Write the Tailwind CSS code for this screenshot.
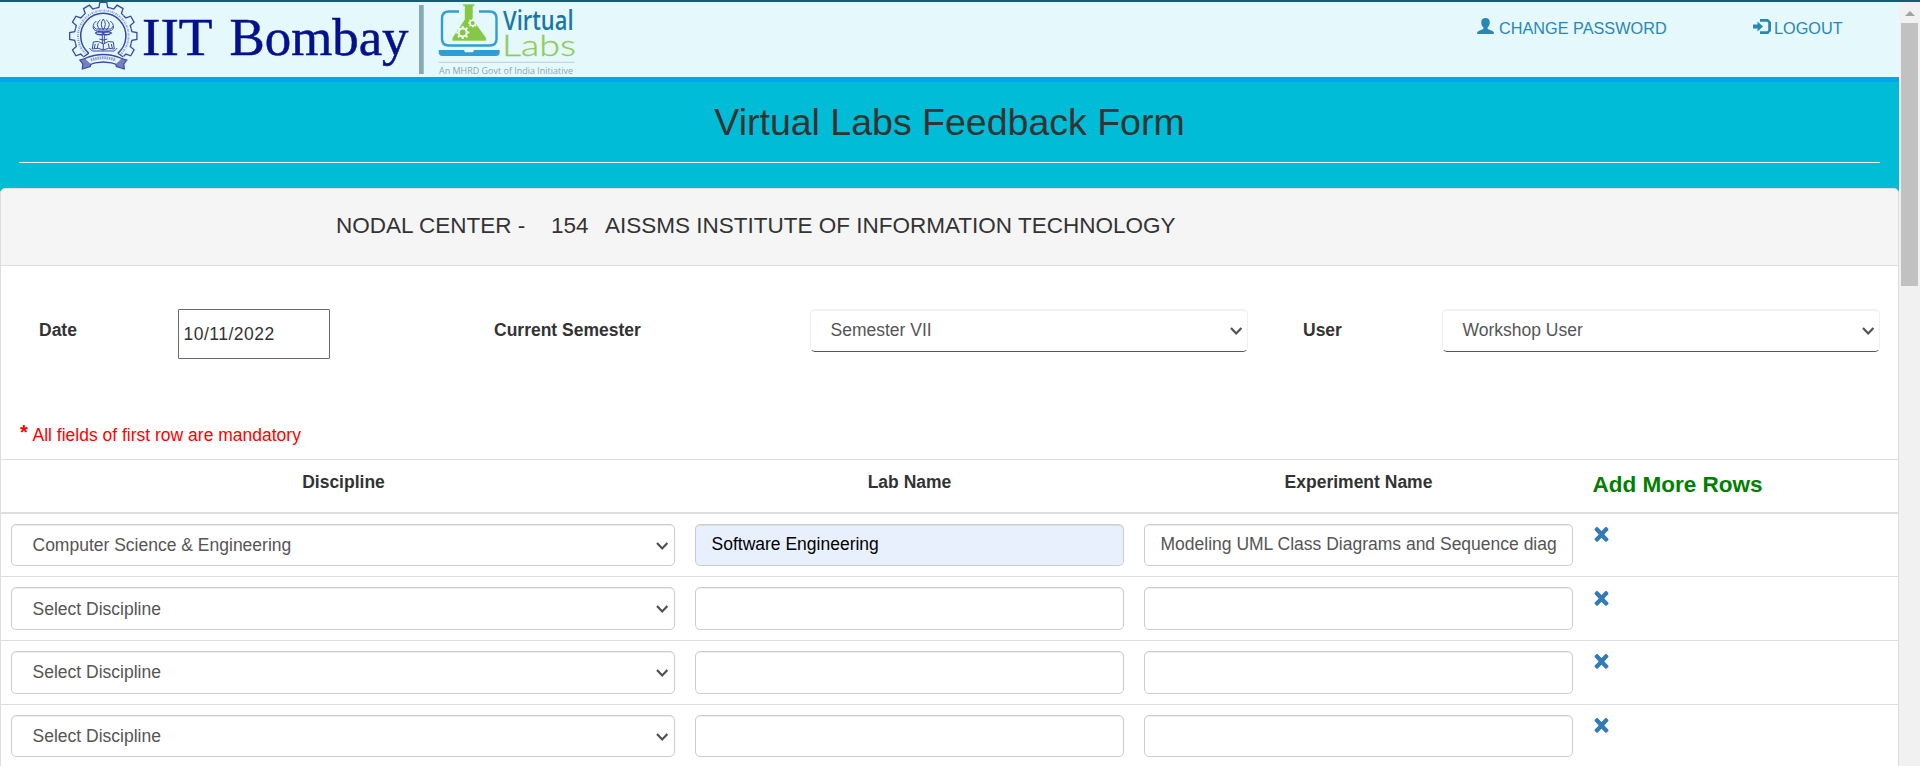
<!DOCTYPE html>
<html lang="en">
<head>
<meta charset="utf-8">
<title>Virtual Labs Feedback Form</title>
<script src="https://cdn.jsdelivr.net/npm/@tailwindcss/browser@4"></script>
</head>
<body class="flex h-[766px] w-[1920px] overflow-hidden bg-white font-['Liberation_Sans',Arial,sans-serif] text-[17.5px] leading-[24px] text-[#333]">
<svg class="hidden">
  <defs>
    <path id="tooth" d="M-7.4 -27.8 L-4.4 -28.6 L-3.4 -33.6 L3.4 -33.6 L4.4 -28.6 L7.4 -27.8" fill="none" stroke="#3a48a8" stroke-width="1.3"/>
    <g id="cog"><circle r="4" fill="none" stroke="#eefaf0" stroke-width="2.2"/><path d="M0-6.6V-4M0 4V6.6M-6.6 0H-4M4 0H6.6M-4.7-4.7L-3-3M3 3L4.7 4.7M-4.7 4.7L-3 3M3-3L4.7-4.7" stroke="#eefaf0" stroke-width="2"/></g>
    <path id="chev" d="M1 1 L6.2 6.4 L11.4 1" fill="none" stroke="#505050" stroke-width="2.2"/>
    <path id="cross" d="M3.8 1.2 L7.5 4.9 L11.2 1.2 Q12 .5 12.8 1.2 L14.2 2.7 Q14.9 3.5 14.2 4.2 L10.3 8.4 L14.2 12.4 Q14.9 13.2 14.2 13.9 L12.8 15.4 Q12 16.1 11.2 15.4 L7.5 11.8 L3.8 15.4 Q3 16.1 2.2 15.4 L.8 13.9 Q.1 13.2 .8 12.4 L4.7 8.4 L.8 4.2 Q.1 3.5 .8 2.7 L2.2 1.2 Q3 .5 3.8 1.2Z" fill="#337ab7"/>
  </defs>
</svg>

<main class="flex h-full w-[1899px] flex-col">
  <header class="flex h-[82px] shrink-0 items-start border-t-2 border-b-[5px] border-t-[#0a6272] border-b-[#03a5ec] bg-[#e5f8fc]">
    <svg class="ml-[60px] block h-[75px] w-[540px] shrink-0" viewBox="60 2 540 75">
      <g transform="translate(103.3 36)">
        <use href="#tooth"/><use href="#tooth" transform="rotate(30)"/><use href="#tooth" transform="rotate(60)"/><use href="#tooth" transform="rotate(90)"/><use href="#tooth" transform="rotate(120)"/><use href="#tooth" transform="rotate(-30)"/><use href="#tooth" transform="rotate(-60)"/><use href="#tooth" transform="rotate(-90)"/><use href="#tooth" transform="rotate(-120)"/>
        <path d="M-14.5 17.3 A22.6 22.6 0 1 1 14.5 17.3" fill="none" stroke="#3a48a8" stroke-width="1.5"/>
        <path d="M-16.5 19 A25.3 25.3 0 1 1 16.5 19" fill="none" stroke="#8a98cf" stroke-width="2" stroke-dasharray="1.3 .9 .7 1.2"/>
        <path d="M-14.5 17.3 L-20 21 M14.5 17.3 L20 21" stroke="#3a48a8" stroke-width="1.2"/>
        <g fill="none" stroke="#3a48a8" stroke-width="1">
          <path d="M0-17 Q-4-12 0-6 Q4-12 0-17 M-3-16 Q-9-12-3-6 M3-16 Q9-12 3-6 M-7-15 Q-13-10-7-7 H7 Q13-10 7-15 M-10-10 Q-11-6-6-5 H6 Q11-6 10-10"/>
          <path d="M-8-3 Q-4-6 0-3 Q4-6 8-3 Q4 0 0-2 Q-4 0-8-3 M-5-4 H5" stroke-width="1.4"/>
          <path d="M-1-1 V8 M1-1 V8 M-4 3 Q0 5 4 3"/>
          <path d="M-10 6 Q-5 4 0 8 Q5 4 10 6 L11 13 Q5 11 0 14 Q-5 11-11 13Z M-11 15 H11 M-8 8 L-9 12 M-5 7.500 L-6 12 M8 8 L9 12 M5 7.500 L6 12 M0 8 V14"/>
          <path d="M-14 12 L-11 15 M14 12 L11 15"/>
        </g>
        <path d="M-18.500 22.500 Q0 14.500 18.500 22.500 L16.500 29.500 Q0 22.500-16.500 29.500Z" fill="#e5f8fc" stroke="#3a48a8" stroke-width="1.300"/>
        <path d="M-18.500 22.500 L-23.500 24 L-20.500 28 L-21 33 L-13 30.500 L-12.500 28 M18.500 22.500 L23.500 24 L20.500 28 L21 33 L13 30.500 L12.500 28" fill="#7480c2" stroke="#3a48a8" stroke-width="1.200"/>
        <path d="M-12.500 24 Q0 19.500 12.500 24" fill="none" stroke="#8a98cf" stroke-width="3" stroke-dasharray="1.5 .8"/>
      </g>
      <g font-family="Liberation Serif, serif" font-size="53" fill="#04118c" stroke="#04118c" stroke-width=".5">
        <text x="142" y="55.300" textLength="70.500" lengthAdjust="spacingAndGlyphs">IIT</text>
        <text x="229.500" y="55.300" textLength="179" lengthAdjust="spacingAndGlyphs">Bombay</text>
      </g>
      <rect x="419" y="5" width="4.700" height="69" fill="#87a9b3"/>
      <path d="M459 11.500 H449 Q442 11.500 442 18.500 V39 Q442 45.500 449 45.500 H489.500 Q496.500 45.500 496.500 39 V18.500 Q496.500 11.500 489.500 11.500 H479" fill="none" stroke="#309dd3" stroke-width="2.400"/>
      <path d="M438.700 50 H464 L465 52.200 H473 L474 50 H499.700 V52 Q499.700 56 495.700 56 H442.700 Q438.700 56 438.700 52Z" fill="#309dd3"/>
      <path d="M462.800 4 H474.700 V6.200 H473 V19.500 L486 37.500 Q487.500 41 484.500 41 H453.500 Q451 41 452.500 37.500 L464.500 19.500 V6.200 H462.800Z" fill="#86c845" stroke="#e5f8fc" stroke-width=".6"/>
      <use href="#cog" transform="translate(462.700 32.500)"/>
      <use href="#cog" transform="translate(472.800 23) scale(.7)"/>
      <text x="503" y="30" textLength="70.500" lengthAdjust="spacingAndGlyphs" font-family="Open Sans, sans-serif" font-weight="600" font-size="26.500" fill="#1877a8">Virtual</text>
      <text x="502" y="56" textLength="74" lengthAdjust="spacingAndGlyphs" font-family="Lato, sans-serif" font-weight="300" font-size="29.500" fill="#8dcc5a" stroke="#8dcc5a" stroke-width=".3">Labs</text>
      <rect x="438.700" y="61.800" width="136" height="1" fill="#b9d0d6"/>
      <text x="439" y="74" textLength="134" lengthAdjust="spacingAndGlyphs" font-family="Open Sans, sans-serif" font-size="9.300" fill="#94a4a9">An MHRD Govt of India Initiative</text>
    </svg>
    <nav class="ml-[877px] flex pt-[13px] text-[16.25px] text-[#2a87b3]">
      <a class="flex w-[276px] items-start gap-[5px]">
        <svg class="mt-[3px] h-[16px] w-[17px] shrink-0" viewBox="0 0 17 16"><path d="M8.500 0 C11 0 12.800 1.500 12.800 4.300 C12.800 6.500 12 8.500 10.600 9.500 V11 L15.500 13.100 Q17 13.800 17 16 H0 Q0 13.800 1.500 13.100 L6.400 11 V9.500 C5 8.500 4.200 6.500 4.200 4.300 C4.200 1.500 6 0 8.500 0Z" fill="#2a87b3"/></svg>
        <span class="pt-px whitespace-nowrap">CHANGE PASSWORD</span>
      </a>
      <a class="flex items-start gap-[3px]">
        <svg class="mt-[4px] h-[15px] w-[18px] shrink-0" viewBox="0 0 18 15"><path d="M0 5.500 H4.500 V2.500 L10 7.500 L4.500 12.500 V9.500 H0Z M7 0 H15 L18 3 V12 L15 15 H7 V12.200 H14.200 L15.200 11.200 V3.800 L14.200 2.800 H7Z" fill="#2a87b3"/></svg>
        <span class="pt-px">LOGOUT</span>
      </a>
    </nav>
  </header>

  <section class="h-[106px] shrink-0 bg-[#00bcd6] px-[19px]">
    <h1 class="h-[81px] border-b border-[#eee] pt-[18px] text-center text-[37.5px] leading-[44px]">Virtual Labs Feedback Form</h1>
  </section>

  <section class="min-h-0 flex-1 bg-[#00bcd6]">
    <div class="h-[600px] rounded-t-[5px] border border-[#ddd] bg-white">
      <div class="flex h-[77px] rounded-t-[4px] border-b border-[#ddd] bg-[#f5f5f5] pt-[24px] pl-[335px] text-[22.5px] leading-[26px] whitespace-pre"><span class="w-[215px]">NODAL CENTER -</span><span class="w-[54px]">154</span><span>AISSMS INSTITUTE OF INFORMATION TECHNOLOGY</span></div>

      <div class="flex h-[148px] items-start pt-[43px] pl-[38px]">
        <label class="w-[139px] pt-[9px] font-bold">Date</label>
        <div class="flex h-[50px] w-[152px] items-center rounded-[1px] border border-[#6b6b6b] pl-[4.5px] tracking-[.5px]">10/11/2022</div>
        <label class="w-[480px] pt-[9px] pl-[164px] font-bold">Current Semester</label>
        <div class="flex h-[43px] w-[438px] items-start justify-between rounded-[5px] border border-[#f0f0f0] border-b-[#555] pt-[8px] pr-[4px] pl-[19.500px] text-[#555] shadow-[inset_0_1px_1px_rgba(0,0,0,0.06)]"><span>Semester VII</span><svg class="mt-[9px] h-[9px] w-[13px]"><use href="#chev"/></svg></div>
        <label class="w-[194px] pt-[9px] pl-[55px] font-bold">User</label>
        <div class="flex h-[43px] w-[438px] items-start justify-between rounded-[5px] border border-[#f0f0f0] border-b-[#555] pt-[8px] pr-[4px] pl-[19.500px] text-[#555] shadow-[inset_0_1px_1px_rgba(0,0,0,0.06)]"><span>Workshop User</span><svg class="mt-[9px] h-[9px] w-[13px]"><use href="#chev"/></svg></div>
      </div>

      <div class="flex h-[45px] items-start pl-[19px] text-[#f00]"><span class="w-[12.5px] pt-[6px] text-[20px] leading-[24px] font-bold">*</span><span class="pt-[9px]">All fields of first row are mandatory</span></div>

      <div class="grid h-[55px] grid-cols-[684px_449px_449px_315px] border-t border-b-2 border-[#ddd] pt-[10px] text-center font-bold">
        <span class="pl-px">Discipline</span><span>Lab Name</span><span>Experiment Name</span><span class="pt-[3px] pl-[9.5px] text-left text-[22.5px] text-[#008000]">Add More Rows</span>
      </div>

      <div class="grid h-[62px] grid-cols-[684px_449px_449px_315px] items-start pt-[10px] text-[#555]">
        <div class="mx-[10px] flex h-[42px] items-start justify-between rounded-[5px] border border-[#ccc] pt-[8px] pr-[5px] pl-[20.5px] shadow-[inset_0_1px_1px_rgba(0,0,0,0.075)]"><span>Computer Science &amp; Engineering</span><svg class="mt-[9px] h-[9px] w-[13px]"><use href="#chev"/></svg></div>
        <div class="mx-[10px] h-[42px] rounded-[5px] border border-[#ccc] bg-[#e8f0fe] pt-[7px] pl-[15.5px] text-black shadow-[inset_0_1px_1px_rgba(0,0,0,0.075)]">Software Engineering</div>
        <div class="mx-[10px] h-[42px] overflow-hidden rounded-[5px] border border-[#ccc] pt-[7px] pl-[15.5px] whitespace-nowrap shadow-[inset_0_1px_1px_rgba(0,0,0,0.075)]">Modeling UML Class Diagrams and Sequence diag</div>
        <svg class="mt-[2px] ml-[11px] h-[17px] w-[15px]"><use href="#cross"/></svg>
      </div>
      <div class="grid h-[64px] grid-cols-[684px_449px_449px_315px] items-start border-t border-[#ddd] pt-[10px] text-[#555]">
        <div class="mx-[10px] flex h-[43px] items-start justify-between rounded-[5px] border border-[#ccc] pt-[9px] pr-[5px] pl-[20.5px] shadow-[inset_0_1px_1px_rgba(0,0,0,0.075)]"><span>Select Discipline</span><svg class="mt-[8px] h-[9px] w-[13px]"><use href="#chev"/></svg></div>
        <div class="mx-[10px] h-[43px] rounded-[5px] border border-[#ccc] shadow-[inset_0_1px_1px_rgba(0,0,0,0.075)]"></div>
        <div class="mx-[10px] h-[43px] rounded-[5px] border border-[#ccc] shadow-[inset_0_1px_1px_rgba(0,0,0,0.075)]"></div>
        <svg class="mt-[3px] ml-[11px] h-[17px] w-[15px]"><use href="#cross"/></svg>
      </div>
      <div class="grid h-[64px] grid-cols-[684px_449px_449px_315px] items-start border-t border-[#ddd] pt-[10px] text-[#555]">
        <div class="mx-[10px] flex h-[43px] items-start justify-between rounded-[5px] border border-[#ccc] pt-[8px] pr-[5px] pl-[20.5px] shadow-[inset_0_1px_1px_rgba(0,0,0,0.075)]"><span>Select Discipline</span><svg class="mt-[9px] h-[9px] w-[13px]"><use href="#chev"/></svg></div>
        <div class="mx-[10px] h-[43px] rounded-[5px] border border-[#ccc] shadow-[inset_0_1px_1px_rgba(0,0,0,0.075)]"></div>
        <div class="mx-[10px] h-[43px] rounded-[5px] border border-[#ccc] shadow-[inset_0_1px_1px_rgba(0,0,0,0.075)]"></div>
        <svg class="mt-[2px] ml-[11px] h-[17px] w-[15px]"><use href="#cross"/></svg>
      </div>
      <div class="grid h-[64px] grid-cols-[684px_449px_449px_315px] items-start border-t border-[#ddd] pt-[10px] text-[#555]">
        <div class="mx-[10px] flex h-[42px] items-start justify-between rounded-[5px] border border-[#ccc] pt-[8px] pr-[5px] pl-[20.5px] shadow-[inset_0_1px_1px_rgba(0,0,0,0.075)]"><span>Select Discipline</span><svg class="mt-[9px] h-[9px] w-[13px]"><use href="#chev"/></svg></div>
        <div class="mx-[10px] h-[42px] rounded-[5px] border border-[#ccc] shadow-[inset_0_1px_1px_rgba(0,0,0,0.075)]"></div>
        <div class="mx-[10px] h-[42px] rounded-[5px] border border-[#ccc] shadow-[inset_0_1px_1px_rgba(0,0,0,0.075)]"></div>
        <svg class="mt-[2px] ml-[11px] h-[17px] w-[15px]"><use href="#cross"/></svg>
      </div>
    </div>
  </section>
</main>

<aside class="flex h-full w-[21px] flex-col items-center border-t-2 border-[#0a6272] bg-[#f1f1f1]">
  <svg class="mt-[9px] h-[5px] w-[10px]" viewBox="0 0 10 5"><path d="M5 0L10 5H0Z" fill="#a3a3a3"/></svg>
  <div class="mt-[7px] h-[263px] w-[17px] bg-[#c1c1c1]"></div>
</aside>
</body>
</html>
